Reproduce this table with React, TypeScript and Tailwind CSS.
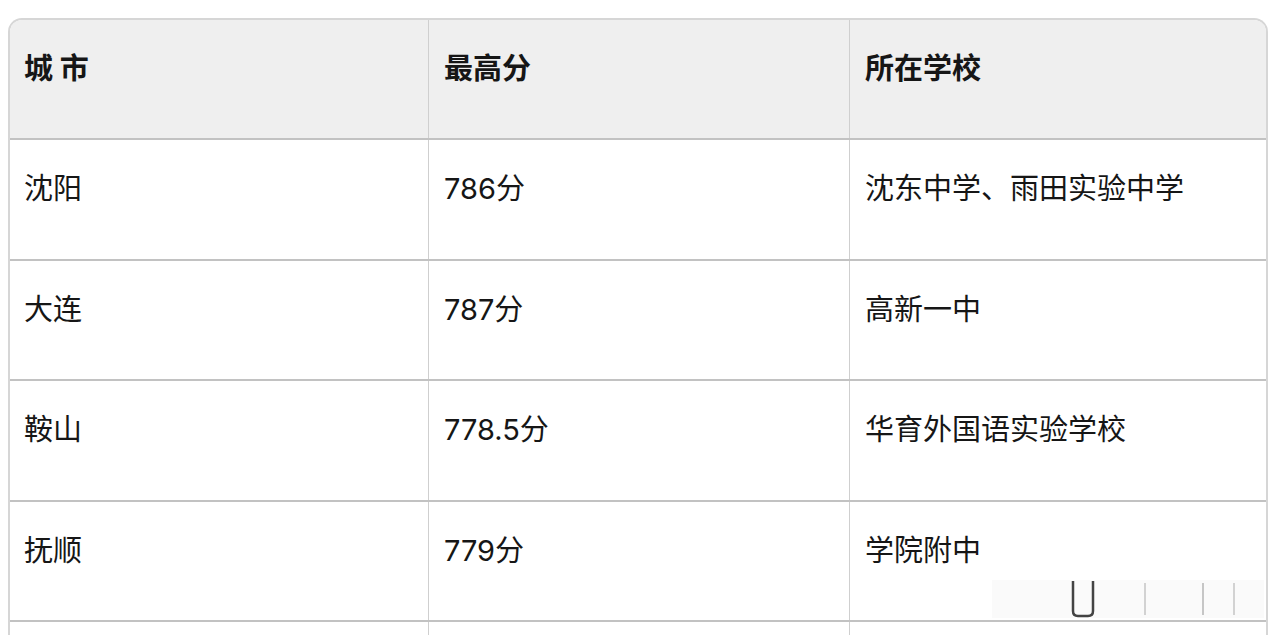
import React from 'react';

const rows = [
  ['沈阳', '786分', '沈东中学、雨田实验中学'],
  ['大连', '787分', '高新一中'],
  ['鞍山', '778.5分', '华育外国语实验学校'],
  ['抚顺', '779分', '学院附中'],
  ['', '', ''],
];

const font = { fontFamily: '"Inter", "Noto Sans CJK SC", sans-serif' };

function Row({ cells, header }: { cells: string[]; header?: boolean }) {
  return (
    <div
      className={`flex h-[120.5px] shrink-0 border-b-2 border-[#c2c2c2] ${
        header ? 'h-[120px] bg-[#efefef]' : 'bg-white'
      }`}
    >
      <div className="w-[419px] shrink-0 border-r border-[#cfcfcf] pl-[14px] pt-[27px]">
        <span className={header ? 'font-bold' : ''}>{cells[0]}</span>
      </div>
      <div className="w-[421px] shrink-0 border-r border-[#cfcfcf] pl-[15px] pt-[27px]">
        <span className={header ? 'font-bold' : ''}>{cells[1]}</span>
      </div>
      <div className="flex-1 pl-[15px] pt-[27px]">
        <span className={header ? 'font-bold' : ''}>{cells[2]}</span>
      </div>
    </div>
  );
}

export default function App() {
  return (
    <div className="h-[635px] w-[1280px] overflow-hidden bg-white pl-[8px] pr-[12px] pt-[18px]" style={font}>
      <div className="relative h-[640px] overflow-hidden rounded-t-[14px] border-x-2 border-t-2 border-[#d6d6d6] text-[29px] leading-[1.5] text-[#161616]">
        <Row header cells={['城 市', '最高分', '所在学校']} />
        {rows.map((r, i) => (
          <Row key={i} cells={r} />
        ))}
        <svg className="absolute left-[980px] top-[555px]" width="280" height="45" viewBox="0 0 280 45">
          <rect x="2" y="5" width="272" height="38" fill="#f9f9f9" opacity="0.8" />
          <path d="M83 6 V36 Q83 41 88 41 H98 Q103 41 103 36 V6" fill="none" stroke="#222" strokeWidth="2.5" opacity="0.85" />
          <line x1="155" y1="8" x2="155" y2="40" stroke="#c4c4c4" strokeWidth="1.5" />
          <line x1="213" y1="8" x2="213" y2="40" stroke="#b4b4b4" strokeWidth="1.5" />
          <line x1="244" y1="8" x2="244" y2="40" stroke="#c4c4c4" strokeWidth="1.5" />
        </svg>
      </div>
    </div>
  );
}
